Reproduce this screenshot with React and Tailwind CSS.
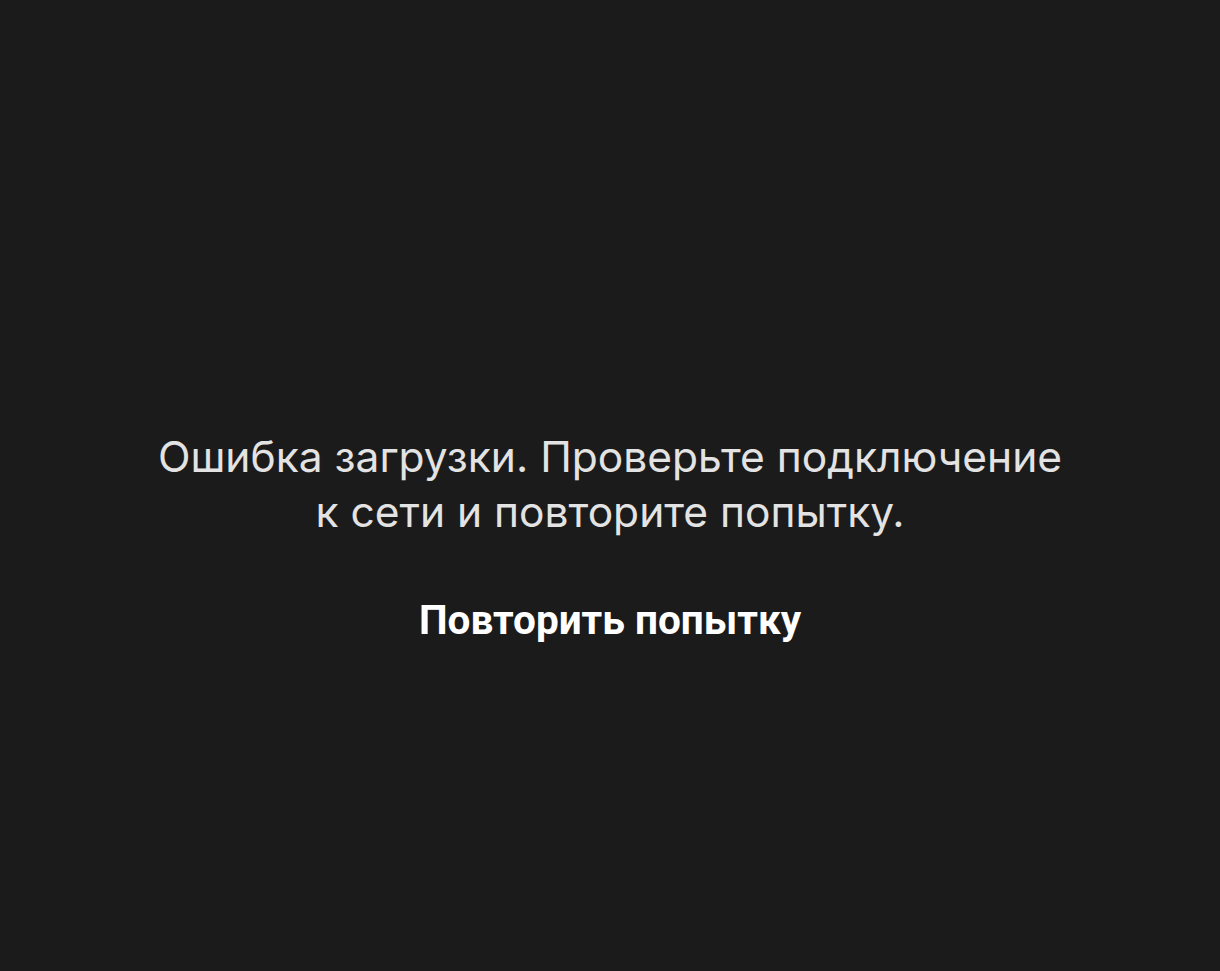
import React from 'react';

const App = () => {
  return (
    <div className="min-h-screen w-full bg-[#1b1b1b] flex flex-col items-center justify-center">
      <div className="flex flex-col items-center pt-[99px]">
        <p
          className="text-center text-[42.5px] leading-[55px] text-[#e3e3e3]"
          style={{ fontFamily: 'Inter, sans-serif' }}
        >
          Ошибка загрузки. Проверьте подключение
          <br />
          к сети и повторите попытку.
        </p>
        <button
          className="mt-[59px] text-[40.5px] leading-[44px] font-bold text-white"
          style={{ fontFamily: 'Roboto, sans-serif' }}
        >
          Повторить попытку
        </button>
      </div>
    </div>
  );
};

export default App;
